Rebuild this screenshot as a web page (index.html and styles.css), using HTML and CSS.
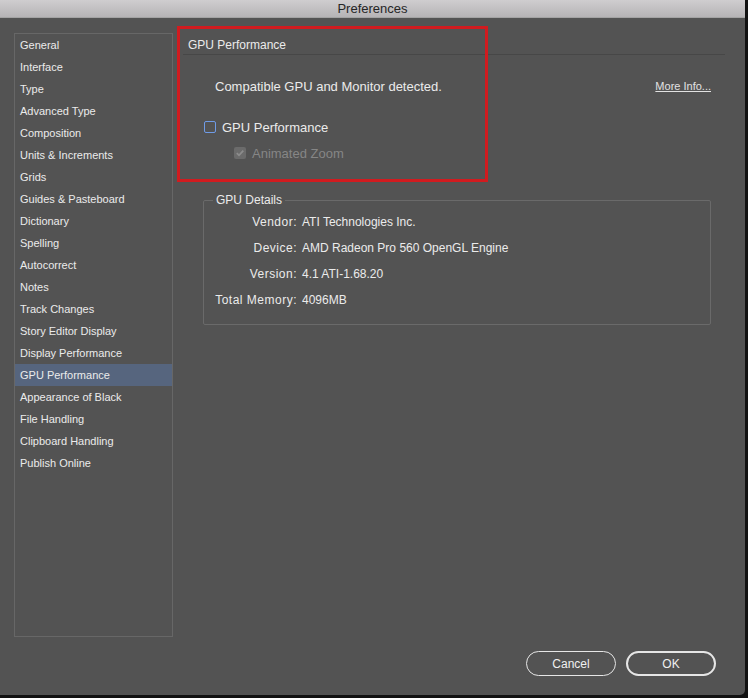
FILE: index.html
```html
<!DOCTYPE html>
<html>
<head>
<title>Preferences</title>
<link rel="stylesheet" href="styles.css">
</head>
<body>
	<div class="window">
		<div class="titlebar">Preferences</div>
		<div class="content">
			<ul class="sidebar">
				<li>General</li>
				<li>Interface</li>
				<li>Type</li>
				<li>Advanced Type</li>
				<li>Composition</li>
				<li>Units &amp; Increments</li>
				<li>Grids</li>
				<li>Guides &amp; Pasteboard</li>
				<li>Dictionary</li>
				<li>Spelling</li>
				<li>Autocorrect</li>
				<li>Notes</li>
				<li>Track Changes</li>
				<li>Story Editor Display</li>
				<li>Display Performance</li>
				<li class="selected">GPU Performance</li>
				<li>Appearance of Black</li>
				<li>File Handling</li>
				<li>Clipboard Handling</li>
				<li>Publish Online</li>
			</ul>
			<div class="panel">
				<div class="panel-title">GPU Performance</div>
				<div class="detect-row">
					<span class="detect">Compatible GPU and Monitor detected.</span>
					<a class="more-info">More Info...</a>
				</div>
				<label class="check">
					<span class="box"></span>
					<span>GPU Performance</span>
				</label>
				<label class="check sub disabled">
					<span class="box checked">
						<svg width="10" height="10" viewBox="0 0 10 10"><path d="M1.8 5.2 L4 7.3 L8.3 2.6" fill="none" stroke="#8c8c8c" stroke-width="1.8"/></svg>
					</span>
					<span>Animated Zoom</span>
				</label>
				<fieldset class="details">
					<legend>GPU Details</legend>
					<div class="detail-grid">
						<span class="lbl">Vendor:</span><span>ATI Technologies Inc.</span>
						<span class="lbl">Device:</span><span>AMD Radeon Pro 560 OpenGL Engine</span>
						<span class="lbl">Version:</span><span>4.1 ATI-1.68.20</span>
						<span class="lbl">Total Memory:</span><span>4096MB</span>
					</div>
				</fieldset>
				<div class="buttons">
					<button class="btn">Cancel</button>
					<button class="btn ok">OK</button>
				</div>
			</div>
		</div>
		<div class="highlight"></div>
	</div>
</body>
</html>
```

FILE: styles.css
```css
* {
	box-sizing: border-box;
}
html, body {
	margin: 0;
	padding: 0;
	background: #121212;
}
body {
	width: 748px;
	height: 698px;
	font-family: "Liberation Sans", Arial, sans-serif;
	color: #ebebeb;
}
.window {
	position: relative;
	width: 745px;
	height: 695px;
	background: #535353;
	border-bottom-right-radius: 5px;
	display: flex;
	flex-direction: column;
}
.titlebar {
	height: 18px;
	background: linear-gradient(#cfcdcf, #b6b4b6);
	border-bottom: 1px solid #a3a3a3;
	color: #262626;
	font-size: 13px;
	line-height: 17px;
	text-align: center;
}
.content {
	flex: 1;
	display: flex;
	padding: 15px 0 0 14px;
}
.sidebar {
	list-style: none;
	margin: 0;
	padding: 0;
	width: 159px;
	height: 604px;
	border: 1px solid #676767;
	font-size: 11px;
}
.sidebar li {
	height: 22px;
	line-height: 22px;
	padding-left: 5px;
	white-space: nowrap;
}
.sidebar li.selected {
	background: #56657e;
}
.panel {
	flex: 1;
	display: flex;
	flex-direction: column;
	padding: 3px 20px 0 10px;
}
.panel-title {
	font-size: 12px;
	height: 19px;
	line-height: 18px;
	padding-left: 5px;
	border-bottom: 1px solid #474747;
}
.detect-row {
	display: flex;
	align-items: center;
	justify-content: space-between;
	margin-top: 22px;
	padding: 0 14px 0 32px;
	height: 18px;
}
.detect {
	font-size: 13px;
}
.more-info {
	font-size: 11px;
	color: #e2e2e2;
	text-decoration: underline;
}
.check {
	display: flex;
	align-items: center;
	gap: 6px;
	margin-top: 24px;
	margin-left: 21px;
	font-size: 13px;
	height: 16px;
}
.check .box {
	width: 12px;
	height: 12px;
	border: 1px solid #6f9be6;
	border-radius: 2px;
	display: flex;
	align-items: center;
	justify-content: center;
}
.check.sub {
	margin-top: 10px;
	margin-left: 51px;
}
.check.disabled {
	color: #868686;
}
.check .box.checked {
	border: none;
	background: #6b6b6b;
}
.details {
	margin: 32px 14px 0 20px;
	padding: 6px 0 14px 9px;
	height: 132px;
	border: 1px solid #6a6a6a;
	border-radius: 2px;
}
.details legend {
	font-size: 12px;
	padding: 0 3px;
	margin-left: 0;
}
.detail-grid {
	display: grid;
	grid-template-columns: 84px auto;
	column-gap: 5px;
	row-gap: 8px;
	font-size: 12px;
	line-height: 18px;
}
.detail-grid .lbl {
	text-align: right;
	letter-spacing: 0.5px;
}
.buttons {
	margin-top: auto;
	margin-bottom: 19px;
	display: flex;
	justify-content: flex-end;
	gap: 10px;
	padding-right: 9px;
}
.btn {
	width: 90px;
	height: 25px;
	border: 1.5px solid #e6e6e6;
	border-radius: 13px;
	background: transparent;
	color: #f0f0f0;
	font-family: "Liberation Sans", Arial, sans-serif;
	font-size: 12px;
}
.btn.ok {
	border-width: 2px;
}
.highlight {
	position: absolute;
	left: 177px;
	top: 26px;
	width: 311px;
	height: 156px;
	border: 3px solid #d11b1f;
}
```
